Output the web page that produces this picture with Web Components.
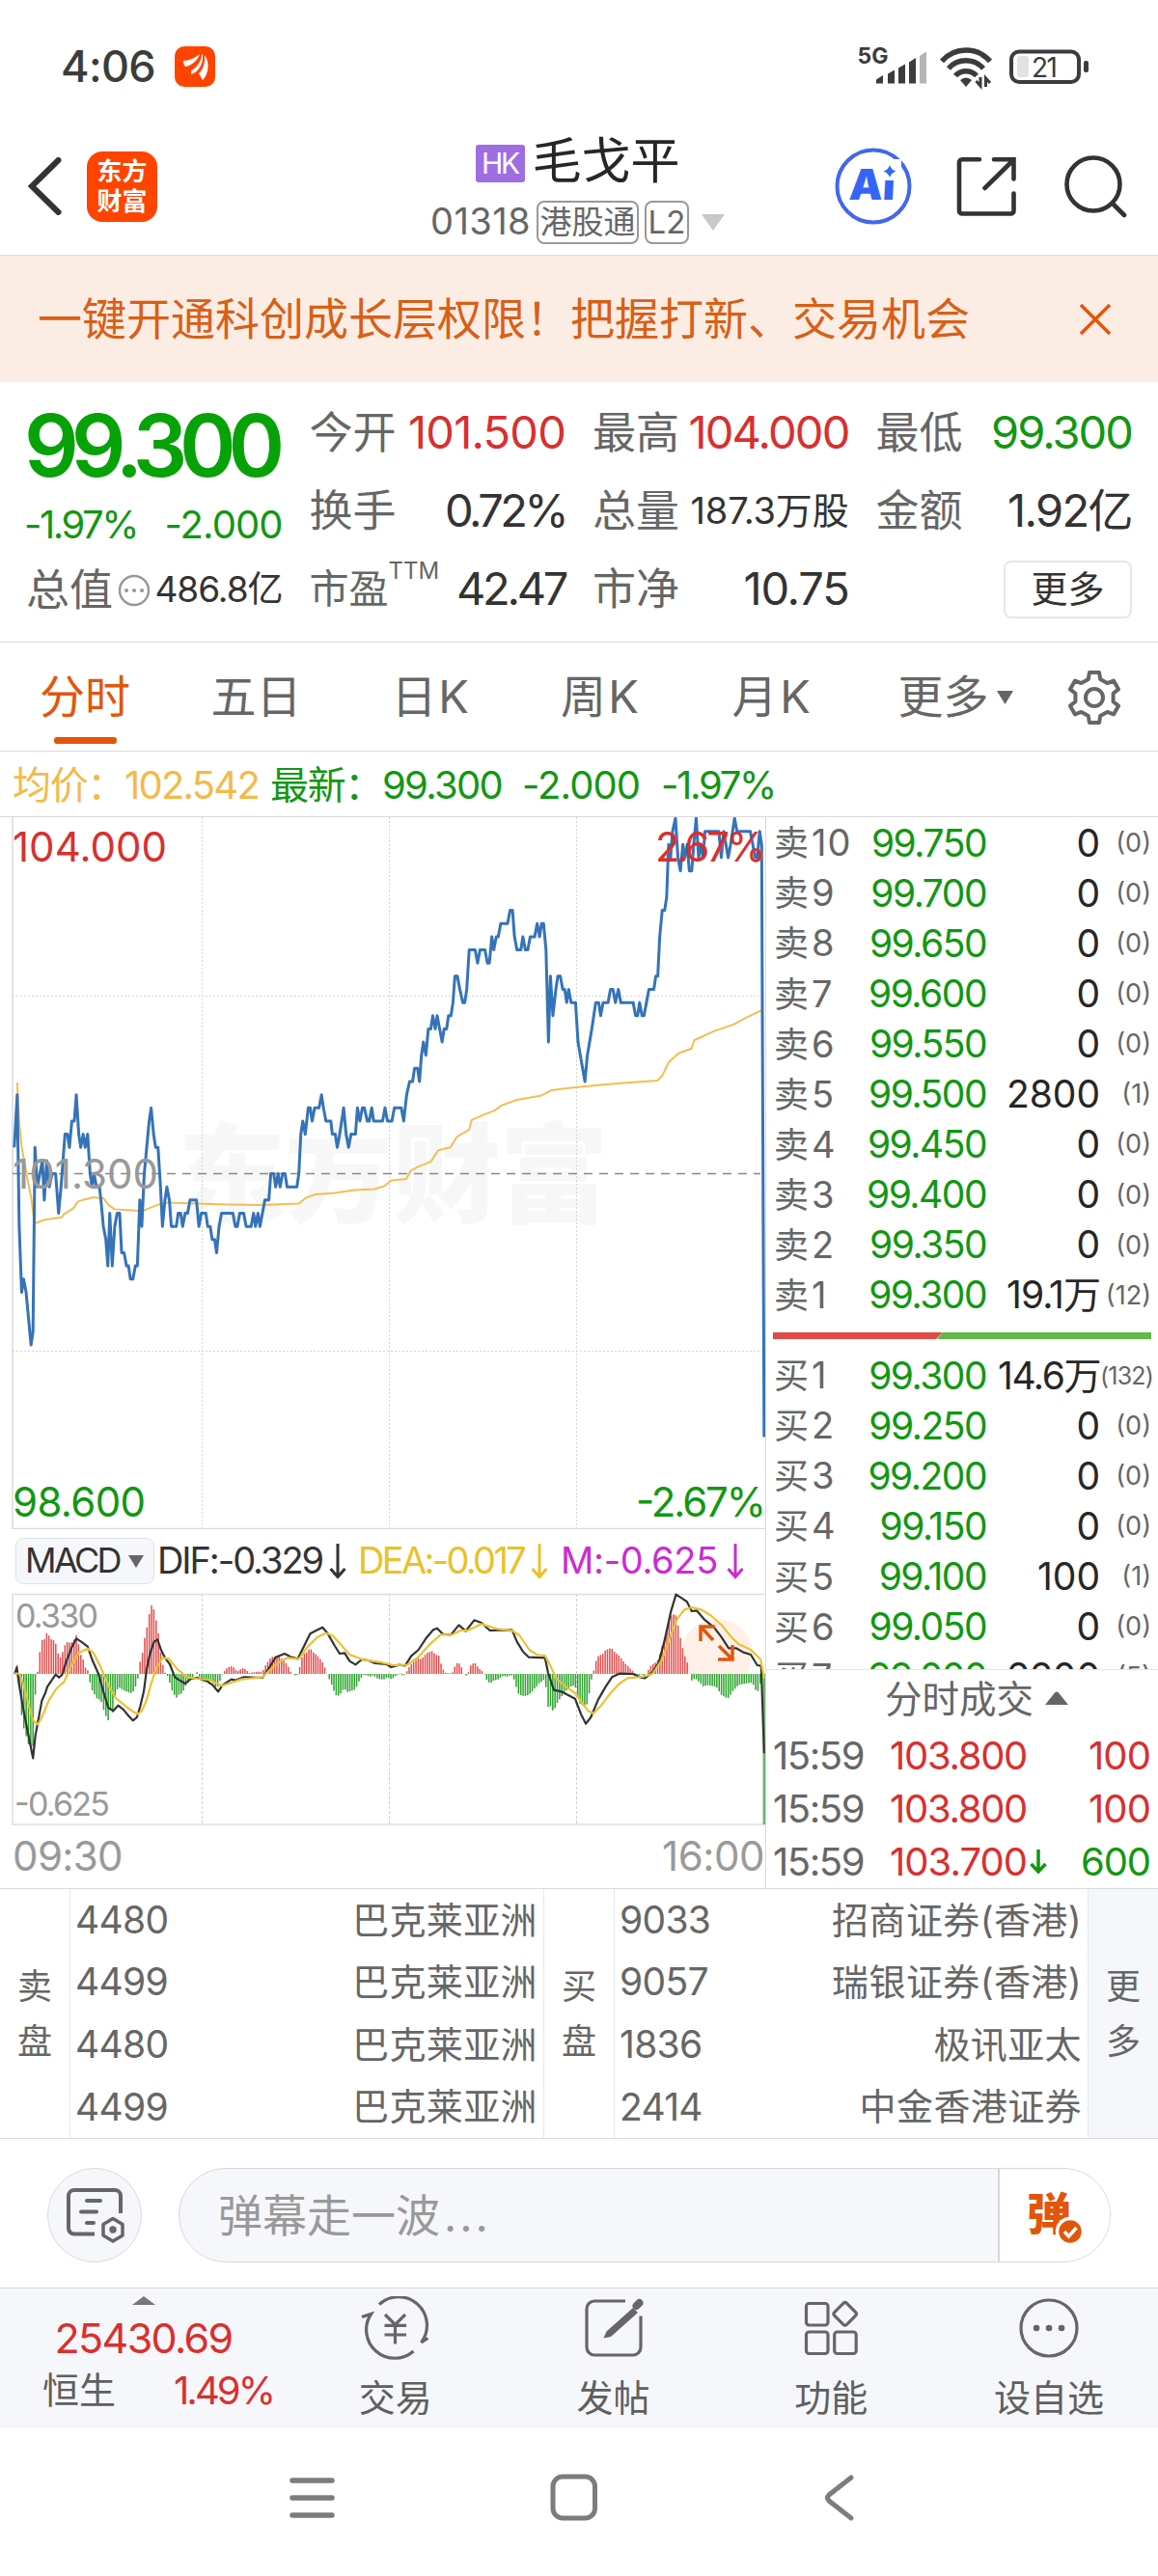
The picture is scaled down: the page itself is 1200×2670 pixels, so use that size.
<!DOCTYPE html>
<html lang="zh-CN">
<head>
<meta charset="utf-8">
<title>毛戈平 01318</title>
<style>
  html, body { margin: 0; padding: 0; background: #fff; }
  body {
    width: 1200px;
    font-family: Inter, "Noto Sans CJK SC", sans-serif;
    line-height: 1.2;
    color: #333;
    --green: #129712;
    --red: #d8302f;
    --grey: #666;
    --orange: #e2560b;
    --line: #d9dadd;
    --panel: #f6f7fa;
  }
  .split { display: grid; grid-template-columns: 793px 1fr; height: 1110px; }
  .split > aside { border-left: 1px solid var(--line); display: flex; flex-direction: column; min-width: 0; }
</style>
</head>
<body>
<status-bar></status-bar>
<page-header name="毛戈平" code="01318"></page-header>
<notice-banner>一键开通科创成长层权限！把握打新、交易机会</notice-banner>
<quote-panel></quote-panel>
<tab-strip></tab-strip>
<price-legend></price-legend>
<div class="split">
  <main>
    <minute-chart></minute-chart>
    <macd-panel></macd-panel>
  </main>
  <aside>
    <order-book></order-book>
    <trade-ticks></trade-ticks>
  </aside>
</div>
<broker-queue></broker-queue>
<comment-bar></comment-bar>
<tool-bar></tool-bar>
<nav-keys></nav-keys>

<script>
class BaseElement extends HTMLElement {
  constructor() {
    super();
    this.shadow = this.attachShadow({mode: 'open'});
  }
  connectedCallback() {
    this.shadow.innerHTML = this.template();
  }
}

// one line of text, tracked so that it fills the width in "w"
class FitText extends BaseElement {
  template() {
    return `
      <style>
        :host { display: inline-block; white-space: nowrap; flex: none; }
        span { display: inline-block; }
      </style>
      <span><slot></slot></span>
    `;
  }
  connectedCallback() {
    super.connectedCallback();
    const w = Number(this.getAttribute("w"));
    const span = this.shadow.querySelector("span");
    const n = this.textContent.length;
    span.style.letterSpacing = (w - span.getBoundingClientRect().width) / n + "px";
    this.style.width = w + "px";
  }
}

class StatusBar extends BaseElement {
  template() {
    return `
      <style>
        :host { display: flex; align-items: center; height: 138px; padding: 0 72px 0 63px; box-sizing: border-box; color: #3c3c3c; }
        .time { font-size: 45px; font-weight: 500; }
        .app { margin-left: 20px; }
        .right { margin-left: auto; }
        svg { display: block; }
      </style>
      <fit-text class="time" w="98">4:06</fit-text>
      <svg class="app" width="42" height="42" viewBox="0 0 42 42">
        <rect width="42" height="42" rx="10" fill="#ff4400"/>
        <g fill="#fff">
          <path d="M9 15 C15 15 21 12 26 8 C24 14 18 20 11 21 C9 19 9 17 9 15Z"/>
          <path d="M28 8 C28 16 22 23 17 25 L17 29 C24 27 30 19 29 9Z"/>
          <path d="M31 9 C32 17 29 25 25 28 L29 35 C35 29 37 17 31 9Z"/>
        </g>
      </svg>
      <svg class="right" width="240" height="48" viewBox="0 0 240 48">
        <text x="0.500" y="21" font-size="23" font-weight="700" textLength="32" fill="#3c3c3c">5G</text>
        <g fill="#3c3c3c">
          <path d="M20 41.500v-4l7-4.500v8.500z"/>
          <path d="M32 41.500v-10l7-4v14z"/>
          <path d="M43 41.500v-16l7-4v20z"/>
          <path d="M54 41.500v-22l7-4.500v26.500z"/>
          <path d="M65 41.500v-28.500l7-4.500v33z" fill="#b4b4b4"/>
        </g>
        <g fill="none" stroke="#3c3c3c" stroke-width="5.500">
          <path d="M88 18.500A33 33 0 0 1 138 18.500"/>
          <path d="M95 26A24 24 0 0 1 131 26"/>
          <path d="M102 33.500A15 15 0 0 1 124 33.500"/>
        </g>
        <path d="M107 38q6-5 12 0l-6 7z" fill="#3c3c3c"/>
        <path d="M128 35v9l-4.500-5M133.500 45v-9l4.500 5" fill="none" stroke="#3c3c3c" stroke-width="3"/>
        <rect x="160" y="8.500" width="70" height="31.500" rx="8" fill="none" stroke="#3c3c3c" stroke-width="4"/>
        <rect x="166" y="13" width="12" height="22" rx="3" fill="#e2e2e2"/>
        <rect x="235" y="18" width="5" height="12" rx="2" fill="#3c3c3c"/>
        <text x="181" y="34.500" font-size="28" textLength="27" fill="#3c3c3c">21</text>
      </svg>
    `;
  }
}

class PageHeader extends BaseElement {
  template() {
    return `
      <style>
        :host {
          display: grid; grid-template-columns: 1fr auto 1fr; grid-template-rows: 110px; align-items: center;
          height: 110px; padding: 0 32px 16px 29px; border-bottom: 1px solid var(--line);
        }
        .left, .right, .row { display: flex; align-items: center; }
        .left { gap: 25px; }
        .right { justify-content: flex-end; }
        .logo {
          width: 73px; height: 73px; border-radius: 16px; background: #ff4400; color: #fff;
          font-size: 26px; font-weight: 700; line-height: 31px; display: flex; flex-direction: column;
          align-items: center; justify-content: center;
        }
        .title { padding-top: 11px; display: flex; flex-direction: column; align-items: center; }
        .row { height: 63px; flex: none; }
        .hk { background: #9f6de2; color: #fff; width: 51px; height: 39px; line-height: 39px; text-align: center; border-radius: 3px; margin: 4px 8px 0 0; font-size: 30px; }
        .name { font-size: 51px; color: #262626; }
        .code { font-size: 38px; color: var(--grey); }
        .tag { border: 2px solid #999; border-radius: 8px; height: 41px; line-height: 40px; font-size: 33px; color: var(--grey); margin-left: 6px; text-align: center; }
        .caret { margin-left: 13px; }
        svg { display: block; }
      </style>
      <div class="left">
        <svg width="36" height="60" viewBox="0 0 36 60"><path d="M31.500 3 4 30 31.500 57" fill="none" stroke="#333" stroke-width="6" stroke-linecap="round"/></svg>
        <div class="logo"><span>东方</span><span>财富</span></div>
      </div>
      <div class="title">
        <div class="row"><span class="hk"><fit-text w="38">HK</fit-text></span><fit-text class="name" w="153">${this.getAttribute("name")}</fit-text></div>
        <div class="row">
          <fit-text class="code" w="104">${this.getAttribute("code")}</fit-text>
          <span class="tag" style="width:102px">港股通</span>
          <span class="tag" style="width:42px">L2</span>
          <svg class="caret" width="24" height="17"><path d="M0 0h24L12 17z" fill="#c8c8c8"/></svg>
        </div>
      </div>
      <div class="right">
        <svg width="80" height="80" viewBox="0 0 80 80">
          <circle cx="40" cy="40" r="37.500" fill="none" stroke="#4168ea" stroke-width="4"/>
          <text x="15" y="54.500" font-size="44" font-weight="900" fill="#3565f6" textLength="48" transform="skewX(-3) translate(2 0)">Ai</text>
          <path d="M47 12h22v22h-22z" fill="#fff"/>
          <path d="M57 18q1.500 5 6.500 6.500-5 1.500-6.500 6.500-1.500-5-6.500-6.500 5-1.500 6.500-6.500z" fill="#3565f6"/>
        </svg>
        <svg style="margin-left:46px" width="63" height="62" viewBox="0 0 63 62" fill="none" stroke="#333" stroke-width="4.600" stroke-linecap="round">
          <path d="M24 3.300H6a3 3 0 0 0-3 3V56.500a3 3 0 0 0 3 3H56.500a3 3 0 0 0 3-3V38.500M39 3.300H59.500V23.500M58 5 29.500 33"/>
        </svg>
        <svg style="margin-left:48px" width="66" height="65" viewBox="0 0 66 65" fill="none" stroke="#333" stroke-width="4.600" stroke-linecap="round">
          <circle cx="31" cy="30" r="27.500"/><path d="M51 50 63 62"/>
        </svg>
      </div>
    `;
  }
}

class NoticeBanner extends BaseElement {
  template() {
    return `
      <style>
        :host { display: flex; align-items: center; justify-content: space-between; height: 131px; padding: 0 48px 0 39px; box-sizing: border-box; background: #fcede4; color: #d95f16; font-size: 46px; }
      </style>
      <span><slot></slot></span>
      <svg width="34" height="34" viewBox="0 0 34 34"><path d="M2 2 32 32M32 2 2 32" stroke="#e2560b" stroke-width="3.500"/></svg>
    `;
  }
}

class QuotePanel extends BaseElement {
  template() {
    const cell = (label, w, value, cls = "", size = 47) => `
      <div class="cell"><label>${label}</label><fit-text class="${cls}" style="font-size:${size}px" w="${w}">${value}</fit-text></div>`;
    return `
      <style>
        :host {
          display: grid; grid-template-columns: repeat(4, 1fr); column-gap: 29px;
          height: 270px; padding: 12px 27px 0 28px; box-sizing: border-box; border-bottom: 1px solid var(--line);
        }
        .cell { display: flex; align-items: center; justify-content: space-between; height: 81px; }
        label { font-size: 45px; color: var(--grey); margin-left: -1px; }
        .up { color: var(--red); }
        .down { color: var(--green); }
        .price { display: block; height: 108px; line-height: 108px; font-size: 89px; font-weight: 600; color: #07a207; margin-left: -3px; }
        .change { display: flex; justify-content: space-between; height: 56px; line-height: 56px; font-size: 40px; margin-left: -3px; }
        .cap { height: 79px; }
        sup { font-size: 24px; align-self: flex-start; line-height: 38px; padding-top: 3px; }
        .pe label { display: flex; align-items: center; height: 81px; font-size: 41px; }
        button { font: inherit; font-size: 38px; color: #333; width: 133px; height: 60px; margin-left: auto; background: #fff; border: 2px solid #e7e7ea; border-radius: 8px; padding: 0; }
      </style>
      <div>
        <fit-text class="price" w="262">99.300</fit-text>
        <div class="change down"><fit-text w="117">-1.97%</fit-text><fit-text w="122">-2.000</fit-text></div>
        <div class="cell cap"><label>总值</label>
          <svg width="34" height="34" viewBox="0 0 34 34" fill="none" stroke="#999" stroke-width="2.500"><circle cx="17" cy="17" r="15"/><path d="M9 17h.1M17 17h.1M25 17h.1" stroke-width="4" stroke-linecap="round"/></svg>
          <fit-text style="font-size:37px" w="132">486.8亿</fit-text></div>
      </div>
      <div>
        ${cell("今开", 163, "101.500", "up")}
        ${cell("换手", 125, "0.72%")}
        <div class="cell pe"><label>市盈<sup>TTM</sup></label><fit-text style="font-size:47px" w="113">42.47</fit-text></div>
      </div>
      <div>
        ${cell("最高", 166, "104.000", "up")}
        ${cell("总量", 164, "187.3万股", "", 38)}
        ${cell("市净", 109, "10.75")}
      </div>
      <div>
        ${cell("最低", 146, "99.300", "down")}
        ${cell("金额", 129, "1.92亿")}
        <div class="cell"><button>更多</button></div>
      </div>
    `;
  }
}

class TabStrip extends BaseElement {
  // outline of a six-toothed gear round (0, 0)
  gear() {
    const pts = [];
    for (let i = 0; i < 6; i++) {
      [[-18, 20], [-11, 26.5], [11, 26.5], [18, 20]].forEach(([d, r]) => {
        const a = (i * 60 - 90 + d) * Math.PI / 180;
        pts.push((r * Math.cos(a)).toFixed(1) + "," + (r * Math.sin(a)).toFixed(1));
      });
    }
    return pts.join(" ");
  }
  template() {
    return `
      <style>
        :host {
          display: grid; grid-template-columns: 176px 179px 183px 169px 187px 192px 95px;
          height: 113px; box-sizing: border-box; border-bottom: 1px solid var(--line);
          font-size: 47px; color: var(--grey);
        }
        div { display: flex; align-items: center; justify-content: center; }
        .on { flex-direction: column; color: var(--orange); padding-top: 14px; line-height: 84px; }
        .on::after { content: ""; width: 65px; height: 7px; border-radius: 3px; background: var(--orange); margin-bottom: 8px; }
      </style>
      <div class="on">分时</div><div>五日</div><div><fit-text w="82">日K</fit-text></div><div><fit-text w="83">周K</fit-text></div><div><fit-text w="84">月K</fit-text></div>
      <div>更多<svg width="17" height="14" style="margin-left:8px"><path d="M0 0h17L8.500 14z" fill="#666"/></svg></div>
      <div><svg width="60" height="60" viewBox="-30 -30 60 60" fill="none" stroke="#666" stroke-width="4" stroke-linejoin="round"><polygon points="${this.gear()}"/><circle r="9"/></svg></div>
    `;
  }
}

class PriceLegend extends BaseElement {
  template() {
    return `
      <style>
        :host { display: flex; align-items: center; height: 68px; padding: 2px 13px 0; box-sizing: border-box; border-bottom: 1px solid var(--line); font-size: 40px; color: var(--green); }
        .avg { color: #f4b94a; }
      </style>
      <fit-text class="avg" w="116">均价：</fit-text><fit-text class="avg" w="139">102.542</fit-text>
      <fit-text w="116" style="margin-left:12px">最新：</fit-text><fit-text w="124">99.300</fit-text>
      <fit-text w="122" style="margin-left:21px">-2.000</fit-text><fit-text w="118" style="margin-left:22px">-1.97%</fit-text>
    `;
  }
}

// last price: x, then steps of 0.1 away from the previous close (101.300)
const PRICE = [
  29,2, 35,6, 39,-4, 44,-9, 48,-8, 53,-9, 63,-13, 67,-12, 71,2, 76,-1, 81,0, 86,1, 90,-2, 95,1, 100,-1, 106,0, 113,0, 119,-3, 124,-1, 128,1,
  132,3, 137,3, 141,2, 146,4, 151,4, 155,6, 160,3, 164,2, 169,3, 173,2, 178,3, 183,0, 187,-1, 191,0, 196,-1, 202,-1, 205,-2, 210,-4, 215,-5, 219,-7,
  223,-3, 228,-7, 233,-4, 238,-3, 243,-3, 247,-6, 252,-6, 257,-7, 261,-7, 265,-8, 270,-8, 275,-7, 279,-7, 284,-2, 288,-4, 293,0, 298,2, 303,4,
  307,5, 312,3, 316,2, 321,2, 326,-1, 330,-4, 335,-2, 339,-1, 344,-2, 348,-4, 358,-4, 362,-3, 367,-3, 371,-4, 376,-3, 381,-3, 386,-2, 399,-2,
  404,-4, 409,-3, 418,-3, 422,-4, 427,-4, 431,-5, 436,-5, 440,-6, 445,-4, 450,-3, 473,-3, 478,-4, 482,-4, 487,-3, 495,-3, 500,-4, 510,-4, 515,-3,
  519,-4, 524,-3, 528,-4, 533,-3, 538,-2, 546,-2, 550,0, 556,0, 560,-1, 565,0, 569,-1, 574,0, 579,0, 583,-1, 603,-1, 607,0, 611,3, 615,4, 620,3,
  626,5, 630,5, 634,4, 639,5, 648,5, 653,6, 657,5, 662,4, 672,4, 675,3, 681,3, 685,2, 690,3, 698,5, 703,3, 708,2, 713,3, 722,3, 726,5, 731,4,
  736,5, 740,5, 746,4, 750,4, 755,5, 759,4, 777,4, 782,5, 787,4, 796,4, 801,5, 815,5, 820,4, 826,6, 832,7, 838,7, 842,8, 848,8, 852,7, 856,9,
  860,10, 865,9, 870,11, 875,11, 879,12, 884,11, 888,12, 893,11, 898,10, 902,11, 907,11, 911,12, 916,12, 920,13, 924,15, 929,15, 934,14, 940,13,
  944,13, 948,14, 953,17, 965,17, 970,16, 975,17, 985,17, 990,16, 994,16, 999,18, 1003,17, 1008,18, 1012,18, 1017,19, 1031,19, 1036,20, 1041,20,
  1045,18, 1050,17, 1058,17, 1062,18, 1067,17, 1072,17, 1077,18, 1086,18, 1091,19, 1096,18, 1100,19, 1104,19, 1109,17, 1114,10, 1118,15, 1123,12,
  1129,14, 1133,15, 1138,15, 1143,14, 1147,14, 1151,13, 1155,14, 1160,13, 1169,13, 1174,10, 1188,7, 1193,9, 1202,11, 1210,13, 1216,13, 1220,12,
  1225,13, 1235,13, 1240,14, 1245,14, 1250,13, 1256,14, 1261,13, 1286,13, 1291,12, 1295,12, 1299,13, 1304,12, 1308,12, 1313,13, 1318,14, 1328,14,
  1332,15, 1336,15, 1340,18, 1345,20, 1350,20, 1354,21, 1358,25, 1362,24, 1366,26, 1372,27, 1377,24, 1382,23, 1387,25, 1391,24, 1396,25, 1400,23,
  1405,23, 1409,25, 1414,27, 1419,24, 1424,25, 1428,24, 1432,26, 1460,26, 1465,24, 1470,26, 1479,24, 1484,25, 1492,27, 1497,26, 1524,26, 1529,25,
  1534,24, 1538,24, 1543,26, 1547,25, 1552,-20
];
const AVERAGE = "35,567 39,650 44,700 50,735 57,775 63,805 70,861 80,857 90,853 105,851 125,848 130,841 140,835 150,828 158,815 170,811 190,806 210,808 220,822 233,831 260,833 290,835 300,830 320,822 340,817 400,819 460,821 530,822 607,819 620,808 640,800 680,797 720,791 760,789 780,783 795,771 825,768 835,750 850,742 875,732 890,708 915,702 928,680 953,665 958,645 985,633 1005,625 1018,615 1050,603 1100,594 1120,583 1160,578 1220,572 1280,567 1335,563 1345,553 1358,525 1378,506 1405,496 1410,479 1450,460 1490,446 1515,432 1548,416";

class MinuteChart extends BaseElement {
  template() {
    let line = "";
    for (let i = 0; i < PRICE.length; i += 2) {
      line += PRICE[i] + "," + (757 - PRICE[i + 1] * 27.44).toFixed(1) + " ";
    }
    return `
      <style>
        :host { display: block; height: 738px; }
        svg { display: block; }
        text { font-size: 42px; }
        polyline { fill: none; vector-effect: non-scaling-stroke; stroke-linejoin: round; }
      </style>
      <svg width="793" height="738" viewBox="0 0 793 738">
        <text x="184" y="412" style="font-size:112px;font-weight:900" textLength="446" fill="#f7f7f8">东方财富</text>
        <g stroke="#d4d4d6" stroke-width="1" stroke-dasharray="2 2">
          <path d="M209.500 0V737M403.500 0V737M597.500 0V737M13 185.500H792M13 553.500H792"/>
        </g>
        <path d="M13 0V737.500H793" fill="none" stroke="#d9dadd" stroke-width="1.500"/>
        <path d="M13 369.500H788" stroke="#888" stroke-width="1.500" stroke-dasharray="9 7"/>
        <g transform="translate(0 -7) scale(.5102 .49744)">
          <polyline points="${AVERAGE}" stroke="#f3be50" stroke-width="2"/>
          <polyline points="${line}" stroke="#3573b8" stroke-width="3"/>
        </g>
        <text x="13" y="46" textLength="160" fill="#d8302f">104.000</text>
        <text x="679" y="46" textLength="115" fill="#d8302f">2.67%</text>
        <text x="13" y="385" textLength="151" fill="#999">101.300</text>
        <text x="13" y="725" textLength="138" fill="#129712">98.600</text>
        <text x="659" y="725" textLength="135" fill="#129712">-2.67%</text>
      </svg>
    `;
  }
}

const HIST = [
  30,465, 34,428, 39,500, 44,595, 48,632, 53,658, 58,685, 63,690, 67,692, 71,540, 76,463, 80,405, 85,360, 90,358, 94,338, 99,345, 104,357, 112,362,
  117,398, 122,415, 126,403, 131,378, 137,365, 144,370, 151,357, 155,345, 160,375, 164,405, 169,420, 173,445, 178,452, 182,487, 187,515, 196,540,
  205,548, 210,575, 214,590, 219,616, 224,575, 228,597, 233,540, 240,505, 250,515, 265,525, 270,522, 279,492, 284,430, 288,412, 293,360, 298,325,
  303,280, 307,250, 312,262, 316,290, 321,330, 326,395, 330,432, 335,460, 340,470, 344,487, 349,515, 354,530, 358,540, 363,530, 370,525, 378,500,
  386,487, 395,466, 400,458, 404,472, 412,488, 430,487, 440,512, 446,490, 450,470, 455,458, 462,445, 472,440, 482,458, 492,447, 500,450, 505,463,
  514,460, 524,458, 533,458, 538,442, 545,425, 551,412, 558,412, 565,408, 574,420, 583,435, 590,458, 598,468, 602,472, 606,465, 611,425, 616,402,
  621,400, 625,395, 630,383, 635,397, 643,405, 650,418, 658,435, 662,458, 667,475, 675,503, 681,530, 688,533, 694,522, 699,508, 705,522, 715,517,
  722,513, 730,485, 740,466, 750,474, 758,470, 768,480, 778,483, 788,475, 796,483, 804,470, 814,462, 819,473, 826,458, 832,440, 840,428, 850,415,
  856,420, 862,407, 868,400, 878,393, 884,405, 892,408, 897,440, 903,460, 912,464, 919,460, 925,437, 930,428, 936,438, 943,468, 949,472, 955,440,
  961,432, 966,432, 972,447, 982,460, 988,482, 995,495, 1003,485, 1012,482, 1022,470, 1032,474, 1038,466, 1045,485, 1052,525, 1060,533, 1070,533,
  1078,525, 1085,512, 1095,495, 1102,487, 1107,480, 1113,568, 1120,565, 1124,585, 1130,560, 1138,540, 1150,517, 1158,505, 1168,500, 1172,530,
  1176,555, 1190,570, 1195,545, 1200,490, 1205,463, 1209,430, 1215,410, 1225,402, 1230,390, 1242,385, 1250,400, 1258,408, 1268,430, 1278,445,
  1288,460, 1295,472, 1302,465, 1308,475, 1315,458, 1322,440, 1335,425, 1340,405, 1350,350, 1358,300, 1364,282, 1372,278, 1378,320, 1384,370,
  1390,405, 1396,430, 1400,462, 1405,485, 1412,478, 1420,490, 1428,503, 1440,500, 1455,505, 1465,530, 1478,543, 1490,515, 1500,500, 1512,495,
  1528,492, 1538,525, 1545,490
];
const DIF = "30,465 34,445 39,500 48,580 57,650 67,727 72,655 80,590 85,548 92,525 96,505 105,485 113,467 120,476 126,468 135,425 145,385 155,355 165,365 178,380 187,420 200,465 210,520 220,570 230,580 240,563 250,575 262,597 270,610 278,600 285,565 292,520 298,450 305,400 313,365 320,358 327,390 335,415 345,435 355,475 365,485 376,495 388,480 400,477 420,487 432,500 443,520 452,500 470,482 478,485 495,475 533,477 545,450 560,413 578,402 590,412 605,418 617,380 630,340 645,328 655,320 665,338 680,378 690,402 700,400 710,425 722,436 735,420 748,423 762,432 785,435 795,444 810,437 823,439 835,410 850,390 865,355 880,328 888,323 900,342 916,343 932,313 946,332 963,298 978,306 995,330 1040,328 1050,365 1062,395 1074,413 1107,415 1113,460 1125,515 1140,520 1155,532 1168,542 1180,590 1190,620 1200,600 1215,545 1230,505 1243,475 1258,464 1285,465 1300,475 1310,478 1325,460 1338,430 1350,360 1362,275 1373,218 1385,230 1395,240 1405,270 1415,268 1430,295 1450,320 1465,350 1480,385 1495,385 1510,398 1525,405 1538,438 1546,440 1552,712";
const DEA = "30,463 40,465 48,500 58,560 67,610 77,622 85,600 100,545 115,510 130,490 145,440 160,400 178,386 190,400 205,445 220,500 235,540 255,565 270,582 280,590 288,580 297,550 307,495 318,445 330,415 343,418 360,450 380,475 400,480 425,483 450,502 470,492 490,482 533,475 550,450 570,425 585,415 607,419 625,380 645,350 662,338 675,345 690,370 710,405 740,422 770,428 800,438 827,437 850,412 875,370 895,343 920,342 935,330 950,330 978,310 1010,325 1040,330 1055,345 1075,390 1090,405 1107,408 1118,440 1130,480 1150,505 1168,525 1180,550 1195,580 1205,588 1220,565 1240,525 1258,495 1275,478 1305,474 1325,465 1345,420 1360,355 1375,295 1390,265 1405,258 1425,265 1445,285 1465,312 1485,350 1500,372 1525,390 1545,420 1552,478";

class MacdPanel extends BaseElement {
  // one bar for every minute, read off the histogram's outline
  bars() {
    let up = "", down = "", i = 0;
    for (let x = 30; x < 1546; x += 4.63) {
      while (i < HIST.length - 4 && HIST[i + 2] < x) i += 2;
      const t = Math.min(1, (x - HIST[i]) / (HIST[i + 2] - HIST[i]));
      const y = HIST[i + 1] + (HIST[i + 3] - HIST[i + 1]) * t;
      const d = `M${x.toFixed(1)} 465V${y.toFixed(1)}`;
      if (y < 465) up += d; else down += d;
    }
    return `<path d="${up}" stroke="#e04f4f"/><path d="${down}" stroke="#2ba32b"/>`;
  }
  template() {
    const arrow = (x, color) => `<svg width="18" height="37" viewBox="0 0 18 37" style="margin-left:${x}px" fill="none" stroke="${color}" stroke-width="3"><path d="M9 0V34M1.500 26 9 34.500 16.500 26"/></svg>`;
    return `
      <style>
        :host { display: block; }
        svg { display: block; flex: none; }
        .head { display: flex; align-items: center; height: 66px; font-size: 38px; padding-left: 16px; }
        .pick { display: flex; align-items: center; gap: 9px; width: 144px; height: 48px; box-sizing: border-box; border: 1px solid #dfe1e6; border-radius: 8px; background: var(--panel); padding-left: 9px; margin-right: 3px; }
        polyline { fill: none; vector-effect: non-scaling-stroke; stroke-linejoin: round; stroke-width: 2.2px; }
        g path { vector-effect: non-scaling-stroke; stroke-width: 1.5px; }
        .times { display: flex; justify-content: space-between; align-items: center; height: 64px; padding: 0 1px 0 13px; font-size: 42px; color: #999; }
      </style>
      <div class="head">
        <div class="pick"><fit-text w="98" style="font-size:36px">MACD</fit-text><svg width="16" height="13"><path d="M0 0h16L8 13z" fill="#666"/></svg></div>
        <fit-text w="171">DIF:-0.329</fit-text>${arrow(7, "#333")}
        <fit-text w="172" style="color:#eac127;margin-left:12px">DEA:-0.017</fit-text>${arrow(7, "#eac127")}
        <fit-text w="163" style="color:#cb2bd3;margin-left:13px">M:-0.625</fit-text>${arrow(9, "#cb2bd3")}
      </div>
      <svg width="793" height="241" viewBox="0 0 793 241">
        <path d="M209.500 1V240M403.500 1V240M597.500 1V240" stroke="#d0d0d2" stroke-dasharray="3 2"/>
        <path d="M793 1.500H13V240H793" fill="none" stroke="#dcdde0" stroke-width="1.500"/>
        <path d="M712 84A37 37 0 1 1 774 84Z" fill="#fef0e8"/>
        <text x="16" y="36" font-size="34" textLength="86" fill="#999">0.330</text>
        <text x="15" y="231" font-size="34" textLength="99" fill="#999">-0.625</text>
        <g transform="translate(0 -71) scale(.5102 .33333)">
          ${this.bars()}
          <path d="M1552 465V933" stroke="#6cb26c" style="stroke-width:2.500px"/>
          <polyline points="${DIF}" stroke="#333"/>
          <polyline points="${DEA}" stroke="#eac232"/>
        </g>
        <path d="M726 50V35H741M727 36 739 49M759 54V69H744M758 68 745 55" fill="none" stroke="#e2560b" stroke-width="3.500"/>
      </svg>
      <div class="times"><fit-text w="114">09:30</fit-text><fit-text w="106">16:00</fit-text></div>
    `;
  }
}

class BookRow extends BaseElement {
  template() {
    return `
      <style>
        :host { display: grid; grid-template-columns: 95px 125px 118px 1fr; align-items: center; height: 52.100px; font-size: 39px; text-align: right; white-space: nowrap; }
        .side { text-align: left; color: var(--grey); font-size: 36px; letter-spacing: 1px; }
        b { font-weight: 400; font-size: 38px; margin-left: 2px; }
        .price { color: var(--green); letter-spacing: -1.5px; }
        .vol { color: #262626; display: flex; justify-content: flex-end; }
        .count { color: var(--grey); font-size: 27px; }
        .long { font-size: 25px; letter-spacing: -.8px; }
      </style>
      <span class="side">${this.dataset.side}<b>${this.dataset.level}</b></span>
      <span class="price">${this.dataset.price}</span>
      <span class="vol">${this.dataset.volume}</span>
      <span class="count ${this.dataset.count.length > 2 ? "long" : ""}">(${this.dataset.count})</span>
    `;
  }
}

class OrderBook extends BaseElement {
  rows(side, list) {
    return list.map(([level, price, volume, count]) =>
      `<book-row data-side="${side}" data-level="${level}" data-price="${price}" data-volume="${String(volume).replace(/"/g, "&quot;")}" data-count="${count}"></book-row>`).join("");
  }
  template() {
    const asks = [
      [10, "99.750", 0, 0], [9, "99.700", 0, 0], [8, "99.650", 0, 0], [7, "99.600", 0, 0], [6, "99.550", 0, 0],
      [5, "99.500", 2800, 1], [4, "99.450", 0, 0], [3, "99.400", 0, 0], [2, "99.350", 0, 0],
      [1, "99.300", '<fit-text w="97">19.1万</fit-text>', 12]
    ];
    const bids = [
      [1, "99.300", '<fit-text w="106">14.6万</fit-text>', 132], [2, "99.250", 0, 0], [3, "99.200", 0, 0], [4, "99.150", 0, 0],
      [5, "99.100", 100, 1], [6, "99.050", 0, 0], [7, "99.000", 6600, 5]
    ];
    return `
      <style>
        :host { display: block; height: 882px; overflow: hidden; padding: 1px 7px 0 8px; border-bottom: 1px solid #e6e6e8; }
        svg { display: block; margin: 12px 0 12px -1px; }
      </style>
      ${this.rows("卖", asks)}
      <svg width="392" height="7"><path d="M0 0H176L169 7H0z" fill="#e04b48"/><path d="M176 0H392V7H170z" fill="#5fb848"/></svg>
      ${this.rows("买", bids)}
    `;
  }
}

class TradeTicks extends BaseElement {
  template() {
    return `
      <style>
        :host { display: block; padding: 0 8px 0 7px; }
        .head { display: flex; align-items: center; justify-content: center; gap: 12px; height: 61px; font-size: 38.500px; color: var(--grey); padding-left: 31px; }
        .row { display: grid; grid-template-columns: 121px 143px 24px 1fr; align-items: center; height: 55px; font-size: 40px; color: var(--red); }
        .time { color: var(--grey); }
        .vol { justify-self: end; }
        .down { color: var(--green); }
      </style>
      <div class="head">分时成交<svg width="24" height="14" style="margin-bottom:4px"><path d="M0 14 10 1.500q2-2 4 0L24 14z" fill="#666"/></svg></div>
      <div class="row"><fit-text class="time" w="94">15:59</fit-text><fit-text w="142">103.800</fit-text><i></i><fit-text class="vol" w="64">100</fit-text></div>
      <div class="row"><fit-text class="time" w="94">15:59</fit-text><fit-text w="142">103.800</fit-text><i></i><fit-text class="vol" w="64">100</fit-text></div>
      <div class="row"><fit-text class="time" w="94">15:59</fit-text><fit-text w="142">103.700</fit-text>
        <svg width="18" height="26" viewBox="0 0 18 26" style="margin-left:2px" fill="none" stroke="#129712" stroke-width="3.500"><path d="M9 0V23M1.500 15 9 23 16.500 15"/></svg>
        <fit-text class="vol down" w="72">600</fit-text></div>
    `;
  }
}

class BrokerQueue extends BaseElement {
  template() {
    const list = (rows) => `<ul>${rows.map(([id, name]) => `<li><span>${id}</span><span class="name">${name}</span></li>`).join("")}</ul>`;
    return `
      <style>
        :host { display: grid; grid-template-columns: 72px 492px 72px 492px 72px; height: 260px; box-sizing: border-box; border-top: 1px solid var(--line); border-bottom: 1px solid var(--line); color: var(--grey); font-size: 36px; }
        .side { display: flex; flex-direction: column; align-items: center; justify-content: center; line-height: 57.500px; padding-top: 2px; }
        ul { list-style: none; margin: 0; padding: 0 6px 0 5px; border: solid #e6e7ea; border-width: 0 1px; font-size: 39px; letter-spacing: -.7px; }
        li { display: flex; justify-content: space-between; align-items: center; height: 64.600px; }
        .name { font-size: 38px; letter-spacing: .4px; }
        .more { background: var(--panel); }
      </style>
      <div class="side"><span>卖</span><span>盘</span></div>
      ${list([["4480", "巴克莱亚洲"], ["4499", "巴克莱亚洲"], ["4480", "巴克莱亚洲"], ["4499", "巴克莱亚洲"]])}
      <div class="side"><span>买</span><span>盘</span></div>
      ${list([["9033", "招商证券(香港)"], ["9057", "瑞银证券(香港)"], ["1836", "极讯亚太"], ["2414", "中金香港证券"]])}
      <div class="side more"><span>更</span><span>多</span></div>
    `;
  }
}

class CommentBar extends BaseElement {
  template() {
    return `
      <style>
        :host { display: flex; align-items: center; height: 154px; padding: 3px 49px 0; box-sizing: border-box; }
        .round { width: 98px; height: 98px; box-sizing: border-box; border: 1.500px solid var(--line); border-radius: 50%; background: var(--panel); display: flex; align-items: center; justify-content: center; }
        .box { flex: 1; margin-left: 38px; height: 98px; box-sizing: border-box; border: 1.500px solid #d5d7db; border-radius: 49px; background: var(--panel); display: flex; overflow: hidden; }
        .hint { flex: 1; line-height: 96px; padding-left: 40px; font-size: 46px; color: #999; }
        .hint i { font-style: normal; letter-spacing: 3px; margin-left: 4px; }
        .send { width: 116px; border-left: 2px solid #d5d7db; background: #fff; display: flex; align-items: center; padding-left: 27px; box-sizing: border-box; }
      </style>
      <div class="round">
        <svg width="62" height="58" viewBox="0 0 62 58" fill="none" stroke="#666" stroke-width="4" stroke-linecap="round">
          <path d="M31 48.500H10a6 6 0 0 1-6-6V9a6 6 0 0 1 6-6H52a6 6 0 0 1 6 6V27" stroke-linecap="butt"/>
          <path d="M23 14H37M17 25.500H33M23 37H30"/>
          <path d="M50 32.500 60 38.500V50L50 56 40 50V38.500Z" stroke-width="3.500" stroke-linejoin="round"/><circle cx="50" cy="44" r="1.700"/>
        </svg>
      </div>
      <div class="box">
        <div class="hint">弹幕走一波<i>...</i></div>
        <div class="send">
          <svg width="60" height="64" viewBox="0 0 60 64">
            <text x="1" y="47" font-size="46" font-weight="900" fill="#e2560b">弹</text>
            <circle cx="46" cy="49" r="13.500" fill="#e2560b" stroke="#fff" stroke-width="3.500"/>
            <path d="M40 49l4.500 5 8-9" fill="none" stroke="#fff" stroke-width="3.500"/>
          </svg>
        </div>
      </div>
    `;
  }
}

class ToolItem extends BaseElement {
  template() {
    return `
      <style>
        :host { display: flex; flex-direction: column; align-items: center; padding-top: 8px; font-size: 38px; line-height: 78px; color: #5f5f5f; }
        ::slotted(svg) { display: block; height: 66px; flex: none; fill: none; stroke: #666; stroke-width: 3.2px; }
      </style>
      <slot></slot>
      <span>${this.getAttribute("label")}</span>
    `;
  }
}

class ToolBar extends BaseElement {
  template() {
    return `
      <style>
        :host { display: grid; grid-template-columns: 297px repeat(4, 1fr); grid-template-rows: 145px; height: 146px; box-sizing: border-box; background: var(--panel); border-top: 1.500px solid var(--line); }
        .index { display: flex; flex-direction: column; align-items: center; padding-top: 8px; font-size: 40px; color: var(--red); }
        .value { font-size: 43px; line-height: 68px; }
        .row { display: flex; justify-content: space-between; align-items: center; width: 239px; height: 42px; margin-left: 30px; }
        .row span { color: #5f5f5f; font-size: 38px; }
      </style>
      <div class="index">
        <svg width="24" height="9"><path d="M0 9 12 0 24 9z" fill="#777"/></svg>
        <fit-text class="value" w="184">25430.69</fit-text>
        <div class="row"><span>恒生</span><fit-text w="103">1.49%</fit-text></div>
      </div>
      <tool-item label="交易">
        <svg width="74" viewBox="0 0 74 66"><path d="M20 8.500A29.500 29.500 0 0 1 63.500 48L70.500 43.500M55.500 57A29.500 29.500 0 0 1 11.500 18.500L2 21.500M26 19 36.500 29.500 47 19M36.500 29V49.500M25.500 30.300H48M25.500 40H48"/></svg>
      </tool-item>
      <tool-item label="发帖">
        <svg width="64" viewBox="0 0 64 66"><path d="M44 5H12a8 8 0 0 0-8 8V53a8 8 0 0 0 8 8H52a8 8 0 0 0 8-8V20.500"/><path d="M52 12 57 17 29 42 21.500 43.500 24.500 36.500Z" fill="#666" stroke="none"/><path d="M55.500 10 58.500 7" stroke-width="8" stroke-linecap="round"/></svg>
      </tool-item>
      <tool-item label="功能">
        <svg width="60" viewBox="0 0 60 66"><rect x="4.500" y="7.500" width="22.500" height="22.500" rx="3"/><rect x="4.500" y="37" width="22.500" height="22.500" rx="3"/><rect x="33.700" y="37" width="22.500" height="22.500" rx="3"/><rect x="-9" y="-9" width="18" height="18" rx="2.500" transform="translate(44.700 18.300) rotate(45)"/></svg>
      </tool-item>
      <tool-item label="设自选">
        <svg width="64" viewBox="0 0 64 66"><circle cx="32" cy="33" r="29"/><path d="M19 33h.1M32 33h.1M45 33h.1" stroke-width="6.500" stroke-linecap="round"/></svg>
      </tool-item>
    `;
  }
}

class NavKeys extends BaseElement {
  template() {
    return `
      <style>
        :host { display: grid; grid-template-columns: 48px 50px 34px; column-gap: 222px; justify-content: start; align-items: center; height: 153px; padding: 0 0 10px 300px; box-sizing: border-box; }
        svg:last-child { margin-left: 10px; }
      </style>
      <svg width="48" height="44" viewBox="0 0 48 44"><path d="M3 4H44M3 22H44M3 40H44" stroke="#7c7c7c" stroke-width="5.500" stroke-linecap="round"/></svg>
      <svg width="50" height="50" viewBox="0 0 50 50"><rect x="3" y="3" width="43.500" height="43" rx="10" fill="none" stroke="#7c7c7c" stroke-width="5"/></svg>
      <svg width="34" height="50" viewBox="0 0 34 50"><path d="M30 4 7 22q-3 3 0 6L30 46" fill="none" stroke="#7c7c7c" stroke-width="5" stroke-linecap="round"/></svg>
    `;
  }
}

window.customElements.define('fit-text', FitText);
window.customElements.define('status-bar', StatusBar);
window.customElements.define('page-header', PageHeader);
window.customElements.define('notice-banner', NoticeBanner);
window.customElements.define('quote-panel', QuotePanel);
window.customElements.define('tab-strip', TabStrip);
window.customElements.define('price-legend', PriceLegend);
window.customElements.define('minute-chart', MinuteChart);
window.customElements.define('macd-panel', MacdPanel);
window.customElements.define('book-row', BookRow);
window.customElements.define('order-book', OrderBook);
window.customElements.define('trade-ticks', TradeTicks);
window.customElements.define('broker-queue', BrokerQueue);
window.customElements.define('comment-bar', CommentBar);
window.customElements.define('tool-item', ToolItem);
window.customElements.define('tool-bar', ToolBar);
window.customElements.define('nav-keys', NavKeys);
</script>
</body>
</html>
